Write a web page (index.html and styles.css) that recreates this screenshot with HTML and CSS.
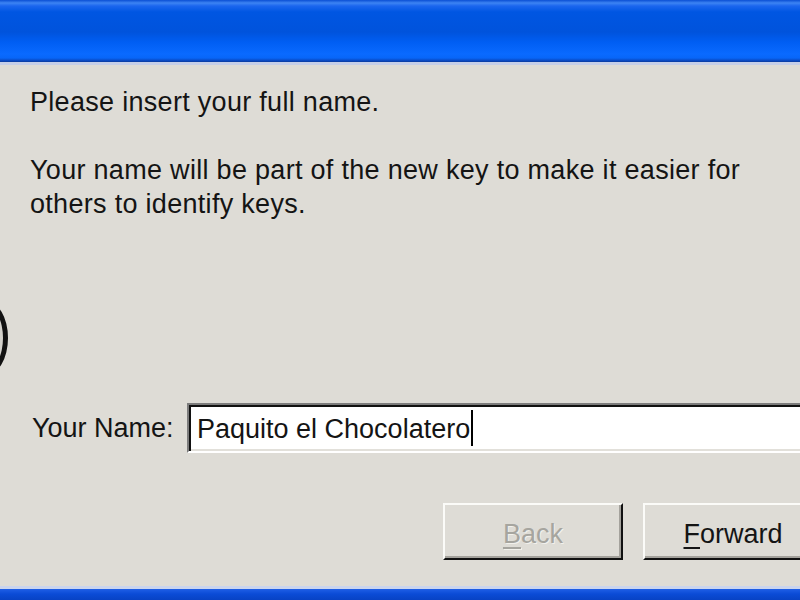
FILE: index.html
```html
<!DOCTYPE html>
<html>
	<head>
		<title>Key Wizard - Your Name</title>
		<link rel="stylesheet" href="styles.css">
	</head>
	<body>
	<div id="window">
		<div class="titlebar"></div>

		<div class="client">
			<div class="icon-edge"></div>

			<p class="intro">Please insert your full name.</p>
			<p class="intro">Your name will be part of the new key to make it easier for others to identify keys.</p>

			<div class="field-row">
				<label for="fullname">Your Name:</label>
				<div class="textbox" id="fullname">Paquito el Chocolatero<span class="caret"></span></div>
			</div>

			<div class="button-row">
				<button class="btn" disabled><u>B</u>ack</button>
				<button class="btn"><u>F</u>orward</button>
			</div>
		</div>

		<div class="taskbar"></div>
	</div>
	</body>
</html>
```

FILE: styles.css
```css
html, body {
	margin: 0;
	height: 100%;
	overflow: hidden;
}
body {
	background-color: #dedcd6;
	color: #141414;
	font: normal 27px "Liberation Sans", Arial, sans-serif;
}
#window {
	width: 800px;
	height: 600px;
	overflow: hidden;
	display: flex;
	flex-direction: column;
}
.titlebar {
	height: 62px;
	flex: none;
	border-bottom: 3px solid #c6cfe8;
	background: linear-gradient(to bottom, #0a4fd4 0px, #3d84f3 3px, #1b66ee 6px, #0056e2 12px, #0053dc 32px, #005ef3 42px, #0a6aff 54px, #0866f8 58px, #0a44b8 61px, #0a3a9a 62px);
}
.client {
	position: relative;
	height: 521px;
	flex: none;
	overflow: hidden;
	padding: 20px 0 0 30px;
	box-sizing: border-box;
}
.icon-edge {
	position: absolute;
	left: -36px;
	top: 236px;
	width: 34px;
	height: 64px;
	border: 5px solid #121212;
	border-radius: 50%;
	background: #d4d2cc;
}
p.intro {
	margin: 0 0 34px 0;
	line-height: 34px;
	letter-spacing: 0.3px;
	width: 740px;
}
p.intro + p.intro {
	margin-bottom: 0;
}
.field-row {
	display: flex;
	align-items: center;
	margin-top: 182px;
	height: 50px;
}
.field-row label {
	width: 157px;
	flex: none;
	padding-left: 2px;
	box-sizing: border-box;
}
.textbox {
	flex: none;
	width: 640px;
	height: 50px;
	box-sizing: border-box;
	background: #fff;
	border: 2px solid;
	border-color: #7c7c7c #fff #fff #7c7c7c;
	box-shadow: inset 2px 2px 0 #111, inset -2px -2px 0 #e2e0da;
	padding: 5px 0 0 8px;
	line-height: 38px;
	white-space: nowrap;
}
.caret {
	display: inline-block;
	width: 2px;
	height: 36px;
	margin-left: 1px;
	background: #000;
	vertical-align: -8px;
}
.button-row {
	display: flex;
	gap: 20px;
	margin: 50px 0 0 413px;
}
.btn {
	flex: none;
	width: 180px;
	height: 57px;
	background: #dedcd6;
	border: 2px solid;
	border-color: #fbfbf8 #111 #111 #fbfbf8;
	box-shadow: inset -2px -2px 0 #a4a29c;
	font: normal 27px "Liberation Sans", Arial, sans-serif;
	color: #141414;
	padding: 5px 0 0 0;
}
.btn u {
	text-underline-offset: 4px;
	text-decoration-thickness: 2px;
}
.btn:disabled {
	color: #a6a59f;
	text-shadow: 1px 1px 0 #f2f1ec;
}
.taskbar {
	flex: 1;
	border-top: 3px solid #c9d4ee;
	background: linear-gradient(to bottom, #1f5fe6, #0b4bd6 5px, #0842c4);
}
```
